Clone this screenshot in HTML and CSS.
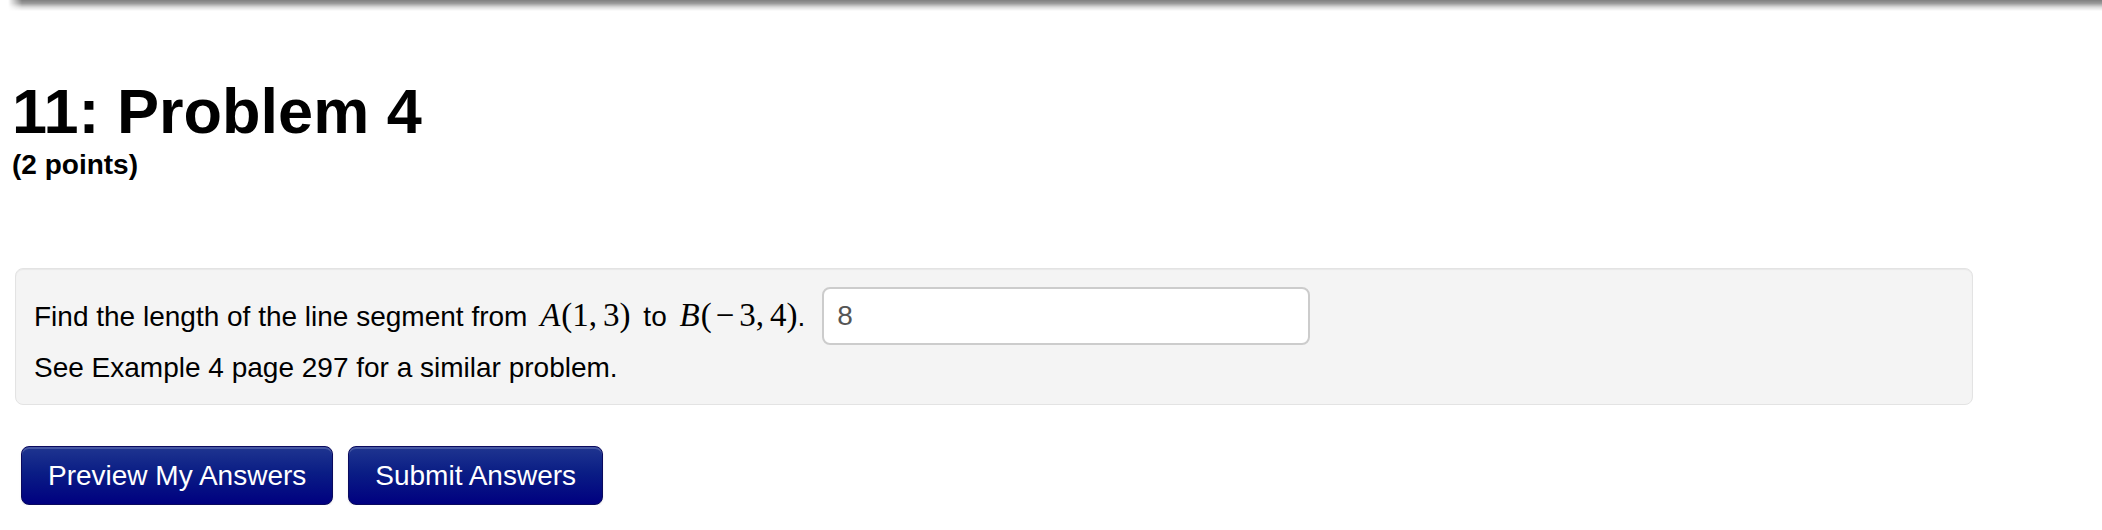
FILE: index.html
```html
<!DOCTYPE html>
<html lang="en">
<head>
<meta charset="utf-8">
<title>11: Problem 4</title>
<link rel="stylesheet" href="styles.css">
</head>
<body>
<div class="topbar"></div>
<main class="main">
  <h1 class="title">11: Problem 4</h1>
  <div class="points">(2 points)</div>
  <div class="well">
    <div class="row">
      <span class="line">Find the length of the line segment from <span class="math"><i>A</i>(1,<span class="thin"></span>3)</span> to <span class="math math-end"><i>B</i>(<span class="minus">−</span>3,<span class="thin"></span>4)</span>.</span>
      <input class="answer" type="text" value="8">
    </div>
    <div class="line">See Example 4 page 297 for a similar problem.</div>
  </div>
  <div class="buttons">
    <button class="btn" type="button">Preview My Answers</button>
    <button class="btn" type="button">Submit Answers</button>
  </div>
</main>
</body>
</html>
```

FILE: styles.css
```css
html, body {
  margin: 0;
  padding: 0;
  background: #ffffff;
}

body {
  font-family: "Liberation Sans", Arial, Helvetica, sans-serif;
  color: #000000;
}

.topbar {
  height: 11px;
  margin-left: 8px;
  background: linear-gradient(to bottom,
    rgba(0, 0, 0, 0.5) 0%,
    rgba(0, 0, 0, 0.4) 30%,
    rgba(0, 0, 0, 0.14) 65%,
    rgba(0, 0, 0, 0) 100%);
  -webkit-mask-image: linear-gradient(to right, transparent 0, #000 14px);
  mask-image: linear-gradient(to right, transparent 0, #000 14px);
}

.main {
  padding: 0 129px 0 12px;
}

.title {
  margin: 65px 0 0 0;
  font-size: 63px;
  line-height: 70px;
  font-weight: bold;
}

.points {
  margin-top: 4px;
  font-size: 28px;
  line-height: 30px;
  font-weight: bold;
}

.well {
  margin: 88px 0 0 3px;
  padding: 18px 18px 16px 18px;
  background: #f4f4f4;
  border: 1px solid #e3e3e3;
  border-radius: 8px;
  box-shadow: inset 0 1px 1px rgba(0, 0, 0, 0.05);
}

.row {
  display: flex;
  align-items: center;
  gap: 17px;
}

.line {
  display: block;
  font-size: 28px;
  line-height: 40px;
}

.row + .line {
  margin-top: 3px;
}

.math {
  font-family: "Liberation Serif", "Times New Roman", serif;
  font-size: 33px;
  white-space: nowrap;
  margin: 0 5px;
}

.math-end {
  margin-right: 0;
}

.math i {
  font-style: italic;
  padding-right: 1px;
}

.minus {
  margin: 0 5px 0 4px;
}

.thin {
  display: inline-block;
  width: 6px;
}

.answer {
  box-sizing: border-box;
  width: 488px;
  height: 58px;
  margin: 0;
  padding: 0 13px;
  font-family: "Liberation Sans", Arial, Helvetica, sans-serif;
  font-size: 28px;
  color: #555555;
  background: #ffffff;
  border: 2px solid #cccccc;
  border-radius: 8px;
  outline: none;
}

.buttons {
  display: flex;
  gap: 15px;
  margin-top: 41px;
  padding-left: 9px;
}

.btn {
  height: 59px;
  padding: 0 26px;
  font-family: "Liberation Sans", Arial, Helvetica, sans-serif;
  font-size: 28px;
  color: #ffffff;
  background: linear-gradient(to bottom, #1f3590 0%, #0a1d85 45%, #000080 100%);
  border: 1px solid #0a0a5e;
  border-radius: 8px;
  box-shadow: inset 0 2px 0 rgba(255, 255, 255, 0.18), 0 1px 2px rgba(0, 0, 0, 0.1);
  cursor: pointer;
}
```
